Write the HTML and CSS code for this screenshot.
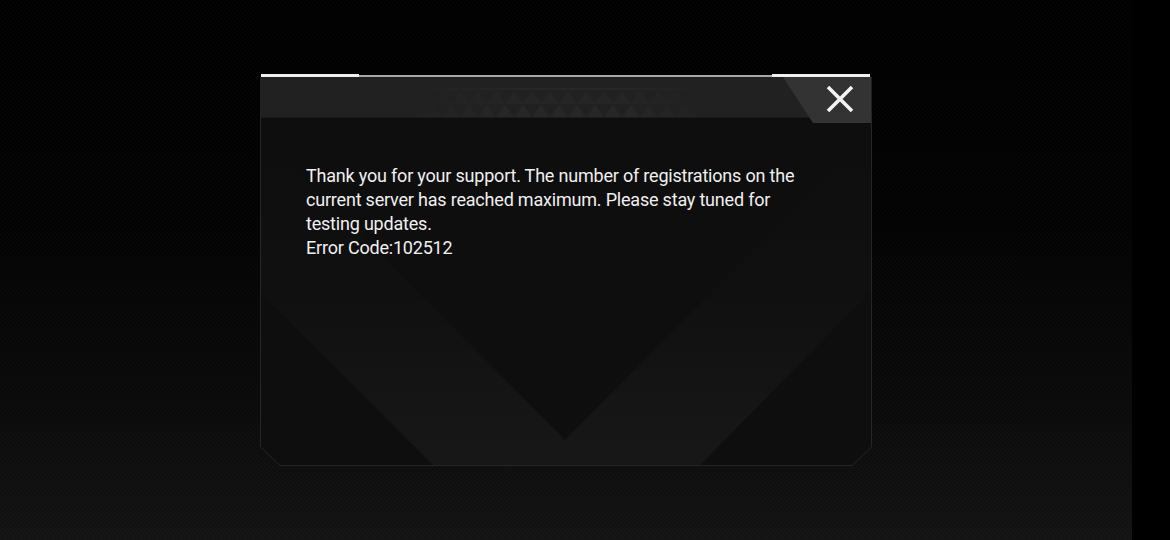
FILE: index.html
```html
<!doctype html>
<html lang="en">
  <head>
    <meta charset="UTF-8" />
    <meta name="viewport" content="width=device-width, initial-scale=1.0" />
    <title>Notice</title>
    <link rel="stylesheet" href="styles.css">
  </head>
  <body>
    <div class="screen">
      <div class="dialog">
        <div class="dialog-top">
          <span class="hl"></span>
          <span class="mid"></span>
          <span class="hl"></span>
        </div>

        <div class="dialog-head">
          <svg class="head-pattern" width="300" height="40" viewBox="0 0 300 40">
            <defs>
              <linearGradient id="fade" x1="0" x2="1" y1="0" y2="0">
                <stop offset="0" stop-color="#fff" stop-opacity="0" />
                <stop offset="0.35" stop-color="#fff" stop-opacity="1" />
                <stop offset="0.75" stop-color="#fff" stop-opacity="1" />
                <stop offset="1" stop-color="#fff" stop-opacity="0" />
              </linearGradient>
              <mask id="fadeMask">
                <rect width="300" height="40" fill="url(#fade)" />
              </mask>
              <pattern id="tri" width="18" height="28" patternUnits="userSpaceOnUse">
                <polygon points="9,0 18,13 0,13" fill="#272727" />
                <polygon points="0,14 9,27 -9,27" fill="#252525" />
                <polygon points="18,14 27,27 9,27" fill="#252525" />
              </pattern>
            </defs>
            <rect y="11" width="300" height="29" fill="url(#tri)" mask="url(#fadeMask)" />
          </svg>
          <button class="close" aria-label="Close">
            <svg width="28" height="28" viewBox="0 0 28 28">
              <path d="M2 2 L26 26 M26 2 L2 26" stroke="#f4f4f4" stroke-width="3.6" stroke-linecap="butt" />
            </svg>
          </button>
        </div>

        <div class="dialog-body">
          <svg class="body-bg" width="612" height="349" viewBox="0 0 612 349">
            <defs>
              <linearGradient id="band" x1="0" x2="0" y1="0" y2="1">
                <stop offset="0" stop-color="#ffffff" stop-opacity="0" />
                <stop offset="0.5" stop-color="#ffffff" stop-opacity="0.01" />
                <stop offset="1" stop-color="#ffffff" stop-opacity="0.04" />
              </linearGradient>
            </defs>
            <polygon points="0.5,0 611.5,0 611.5,330 592,348.5 20,348.5 0.5,330" fill="#0e0e0e" stroke="#262626" stroke-width="1" />
            <polygon points="1,176 173,348 440,348 611,174 611,15 305,323 1,18" fill="url(#band)" />
          </svg>
          <p class="message">
            Thank you for your support. The number of registrations on the current server has reached maximum. Please stay tuned for testing updates.
            <br>Error Code:102512
          </p>
        </div>
      </div>
    </div>
  </body>
</html>
```

FILE: styles.css
```css
body {
  margin: 0;
  background-color: #000;
  font-family: "Roboto", "Liberation Sans", sans-serif;
}

.screen {
  width: 1132px;
  height: 540px;
  padding-top: 74px;
  box-sizing: border-box;
  background:
    repeating-conic-gradient(rgba(255, 255, 255, 0.012) 0 25%, transparent 0 50%) 0 0 / 4px 4px,
    linear-gradient(to bottom, #000 0, #030303 230px, #0b0b0b 420px, #131313 540px);
}

.dialog {
  width: 612px;
  margin: 0 auto;
}

.dialog-top {
  display: flex;
  height: 3px;
}

.dialog-top .hl {
  width: 98px;
  height: 3px;
  background-color: #f0f0f0;
  margin-left: 1px;
}

.dialog-top .hl:last-child {
  margin-left: 0;
  margin-right: 2px;
}

.dialog-top .mid {
  flex: 1;
  height: 2px;
  align-self: flex-end;
  background-color: #a9a9a9;
}

.dialog-head {
  position: relative;
  height: 40px;
  background-color: #212121;
  display: flex;
  justify-content: center;
}

.head-pattern {
  display: block;
  margin-left: -20px;
}

.close {
  position: absolute;
  top: 0;
  right: 1px;
  width: 88px;
  height: 46px;
  padding: 0 0 0 26px;
  border: none;
  background-color: #333;
  clip-path: polygon(0 0, 100% 0, 100% 100%, 30px 100%);
  display: flex;
  align-items: center;
  justify-content: center;
  cursor: pointer;
  z-index: 2;
}

.close svg {
  display: block;
  margin-top: -2px;
}

.dialog-body {
  position: relative;
  height: 349px;
  padding: 47px 46px 0;
  box-sizing: border-box;
}

.body-bg {
  position: absolute;
  top: 0;
  left: 0;
}

.message {
  position: relative;
  margin: 0;
  max-width: 500px;
  color: #f0f0f0;
  font-size: 18px;
  line-height: 24px;
  letter-spacing: -0.2px;
}
```
